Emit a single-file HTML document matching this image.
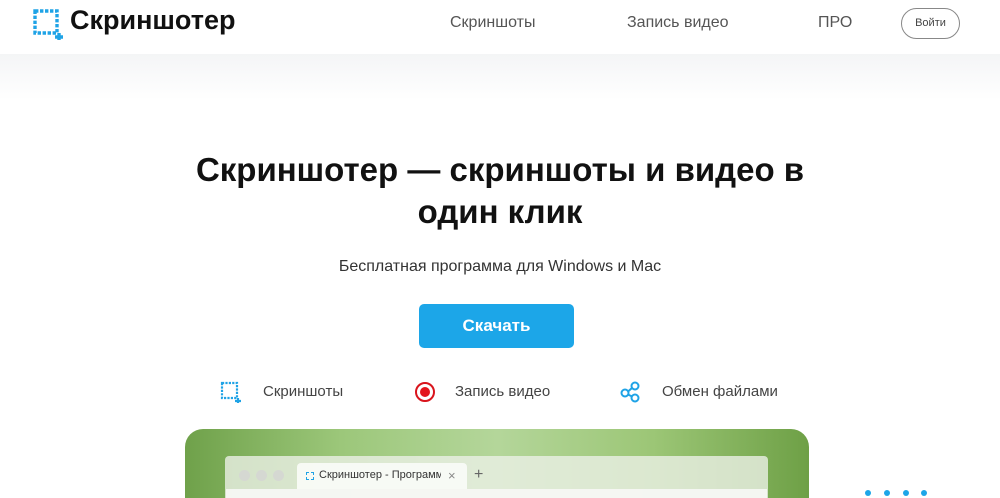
<!DOCTYPE html>
<html style="height:498px;overflow:hidden"><head><meta charset="utf-8"><style>
*{margin:0;padding:0;box-sizing:border-box}
body{width:1000px;height:498px;overflow:hidden;background:#fff;font-family:"Liberation Sans",Arial,sans-serif;position:relative;color:#222}
.hdr{position:absolute;left:0;top:0;width:1000px;height:54px;background:#fff}
.shade{position:absolute;left:0;top:54px;width:1000px;height:46px;background:linear-gradient(#f4f5f6,#fff)}
.abs{position:absolute}
.nav{font-size:16px;color:#555;top:14px}
h1{position:absolute;left:0;width:1000px;top:149px;text-align:center;font-size:33px;line-height:42px;font-weight:bold;color:#111}
</style></head><body>
<div class="hdr"></div><div class="shade"></div>
<svg class="abs" style="left:32px;top:8px" width="32" height="32" viewBox="0 0 32 32"><rect x="3" y="3" width="22" height="22" fill="none" stroke="#1fa3e6" stroke-width="3.4" stroke-dasharray="3.4 1.6"/><path d="M23 29h8M27 25v8" stroke="#1fa3e6" stroke-width="3.4"/></svg>
<div class="abs" style="left:70px;top:5px;font-size:27px;font-weight:bold;color:#111">Скриншотер</div>
<div class="abs nav" style="left:450px">Скриншоты</div>
<div class="abs nav" style="left:627px">Запись видео</div>
<div class="abs nav" style="left:818px">ПРО</div>
<div class="abs" style="left:901px;top:8px;width:59px;height:31px;border:1px solid #888;border-radius:16px;font-size:11px;color:#444;text-align:center;line-height:29px">Войти</div>
<h1>Скриншотер — скриншоты и видео в<br>один клик</h1>
<div class="abs" style="left:0;width:1000px;top:258px;text-align:center;font-size:16px;color:#333">Бесплатная программа для Windows и Mac</div>
<div class="abs" style="left:419px;top:304px;width:155px;height:44px;background:#1ca6e8;border-radius:5px;color:#fff;font-weight:bold;font-size:17px;text-align:center;line-height:44px">Скачать</div>
<svg class="abs" style="left:220px;top:381px" width="22" height="22" viewBox="0 0 22 22"><rect x="2" y="2" width="15" height="15" fill="none" stroke="#1fa3e6" stroke-width="2.2" stroke-dasharray="2.2 1.2"/><path d="M15 20h6M18 17v5" stroke="#1fa3e6" stroke-width="2.2"/></svg>
<div class="abs" style="left:263px;top:383px;font-size:15px;color:#444">Скриншоты</div>
<svg class="abs" style="left:413px;top:380px" width="24" height="24"><circle cx="12" cy="12" r="9" fill="none" stroke="#d9141c" stroke-width="2"/><circle cx="12" cy="12" r="5" fill="#e3141c"/></svg>
<div class="abs" style="left:455px;top:383px;font-size:15px;color:#444">Запись видео</div>
<svg class="abs" style="left:619px;top:380px" width="24" height="24" fill="none" stroke="#1fa3e6" stroke-width="2"><circle cx="6" cy="13" r="3.5"/><circle cx="16" cy="6" r="3.5"/><circle cx="16" cy="18" r="3.5"/><path d="M9 11.5l4-3.5M9 14.5l4 2"/></svg>
<div class="abs" style="left:662px;top:383px;font-size:15px;color:#444">Обмен файлами</div>
<div class="abs" style="left:185px;top:429px;width:624px;height:69px;border-radius:18px 18px 0 0;background:linear-gradient(90deg,#6fa14a,#9cc77a 25%,#b4d69a 50%,#9cc676 75%,#6ea046)"></div>
<div class="abs" style="left:225px;top:456px;width:543px;height:42px;border-radius:4px 4px 0 0;background:rgba(235,240,230,0.8)"></div>
<div class="abs" style="left:239px;top:470px;width:11px;height:11px;border-radius:50%;background:#d5d8d2"></div>
<div class="abs" style="left:256px;top:470px;width:11px;height:11px;border-radius:50%;background:#d5d8d2"></div>
<div class="abs" style="left:273px;top:470px;width:11px;height:11px;border-radius:50%;background:#d5d8d2"></div>
<div class="abs" style="left:297px;top:463px;width:170px;height:26px;background:rgba(250,252,248,0.9);border-radius:4px 4px 0 0"></div>
<div class="abs" style="left:306px;top:472px;width:8px;height:8px;border:1.5px dashed #1fa3e6"></div>
<div class="abs" style="left:319px;top:469px;width:122px;overflow:hidden;font-size:11px;color:#333;white-space:nowrap">Скриншотер - Программа дл</div>
<div class="abs" style="left:448px;top:468px;font-size:13px;color:#888">×</div>
<div class="abs" style="left:474px;top:466px;font-size:16px;color:#666">+</div>
<div class="abs" style="left:226px;top:489px;width:541px;height:9px;background:rgba(245,247,243,0.95)"></div>
<div class="abs" style="left:865px;top:490px;width:6px;height:6px;border-radius:50%;background:#1ca6e8"></div>
<div class="abs" style="left:884px;top:490px;width:6px;height:6px;border-radius:50%;background:#1ca6e8"></div>
<div class="abs" style="left:903px;top:490px;width:6px;height:6px;border-radius:50%;background:#1ca6e8"></div>
<div class="abs" style="left:921px;top:490px;width:6px;height:6px;border-radius:50%;background:#1ca6e8"></div>
</body></html>
